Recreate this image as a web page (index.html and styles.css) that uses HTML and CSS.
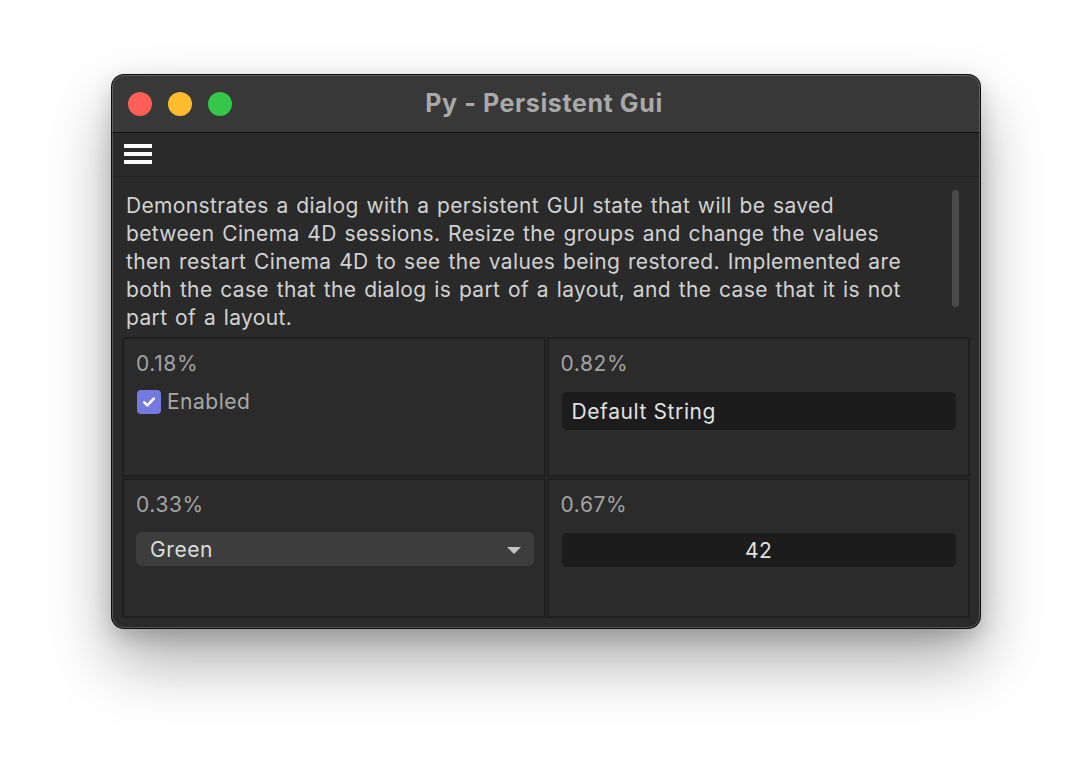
FILE: index.html
```html
<!DOCTYPE html>
<html lang="en">
<head>
<meta charset="utf-8">
<title>Py - Persistent Gui</title>
<link rel="stylesheet" href="styles.css">
</head>
<body>
<div class="stage">
  <div class="window">
    <div class="titlebar">
      <div class="lights">
        <span class="light red"></span>
        <span class="light yellow"></span>
        <span class="light green"></span>
      </div>
      <div class="title">Py - Persistent Gui</div>
      <div class="spacer"></div>
    </div>
    <div class="toolbar">
      <span class="hamburger"><i></i><i></i><i></i></span>
    </div>
    <div class="content">
      <div class="desc-wrap">
        <p class="desc">Demonstrates a dialog with a persistent GUI state that will be saved<br>between Cinema 4D sessions. Resize the groups and change the values<br>then restart Cinema 4D to see the values being restored. Implemented are<br>both the case that the dialog is part of a layout, and the case that it is not<br>part of a layout.</p>
        <div class="scrollbar"></div>
      </div>
      <div class="grid">
        <div class="cell">
          <div class="label">0.18%</div>
          <label class="check">
            <span class="box"><svg width="16" height="16" viewBox="0 0 16 16"><path d="M3.2 8.4 L6.4 11.4 L12.8 4.6" fill="none" stroke="#fff" stroke-width="2.6" stroke-linecap="round" stroke-linejoin="round"/></svg></span>
            <span class="check-text">Enabled</span>
          </label>
        </div>
        <div class="cell">
          <div class="label">0.82%</div>
          <div class="field text-field">Default String</div>
        </div>
        <div class="cell">
          <div class="label">0.33%</div>
          <div class="dropdown">
            <span>Green</span>
            <svg class="arrow" width="14" height="8" viewBox="0 0 14 8"><path d="M0 0 H14 L7 7 Z" fill="#c4c4c4"/></svg>
          </div>
        </div>
        <div class="cell">
          <div class="label">0.67%</div>
          <div class="field number-field">42</div>
        </div>
      </div>
    </div>
  </div>
</div>
</body>
</html>
```
FILE: styles.css
```css
* { box-sizing: border-box; }
html, body { margin: 0; padding: 0; background: #ffffff; }
body { font-family: Inter, "Open Sans", "Liberation Sans", sans-serif; }

.stage {
  height: 776px;
  padding: 75px 0 0 112px;
}

.window {
  position: relative;
  width: 868px;
  height: 553px;
  border-radius: 12px;
  overflow: hidden;
  background: #2a2a2a;
  box-shadow: 0 0 0 1px #0c0c0c, 0 32px 64px rgba(0,0,0,0.34), 0 8px 22px rgba(0,0,0,0.18);
  display: flex;
  flex-direction: column;
}
.window::after {
  content: "";
  position: absolute;
  inset: 0;
  border-radius: 12px;
  border: 1px solid rgba(255,255,255,0.2);
  pointer-events: none;
}

.titlebar {
  height: 58px;
  background: #383838;
  border-bottom: 1px solid #101010;
  display: grid;
  grid-template-columns: 1fr auto 1fr;
  align-items: center;
  flex: none;
}
.lights {
  display: flex;
  gap: 16px;
  padding-left: 16px;
}
.light {
  width: 24px;
  height: 24px;
  border-radius: 50%;
  display: block;
}
.red { background: #fe5f57; }
.yellow { background: #febc2e; }
.green { background: #34c749; }
.title {
  color: #a9a9a9;
  font-weight: 700;
  font-size: 25px;
  letter-spacing: 0.6px;
  padding-bottom: 2px;
  padding-right: 4px;
}

.toolbar {
  height: 44px;
  background: #2a2a2a;
  border-bottom: 1px solid #222222;
  display: flex;
  align-items: center;
  padding-left: 12px;
  flex: none;
}
.hamburger {
  display: flex;
  flex-direction: column;
  gap: 4px;
  width: 28px;
  margin-top: -1px;
}
.hamburger i {
  display: block;
  height: 4px;
  background: #ffffff;
}

.content {
  flex: 1;
  background: #2a2a2a;
  display: flex;
  flex-direction: column;
  padding: 0 10px 10px 10px;
}
.desc-wrap {
  display: flex;
  align-items: flex-start;
  padding: 15px 11px 0 4px;
}
.desc {
  flex: 1;
  margin: 0;
  color: #d2d2d2;
  font-size: 21px;
  line-height: 28px;
  letter-spacing: 0.35px;
  word-spacing: 1.5px;
}
.scrollbar {
  width: 7px;
  height: 117px;
  margin-top: -2px;
  border-radius: 4px;
  background: #4a4a4a;
  flex: none;
}

.grid {
  margin-top: 5px;
  flex: 1;
  display: grid;
  grid-template-columns: 1fr 1fr;
  grid-template-rows: 1fr 1fr;
  gap: 1px;
}
.cell {
  background: #2b2b2b;
  border: 2px solid #1f1f1f;
  padding: 13px 12px 0 12px;
}
.label {
  color: #a3a3a3;
  font-size: 21px;
  line-height: 24px;
  letter-spacing: 0.6px;
}

.check {
  display: flex;
  align-items: center;
  gap: 6px;
  margin-top: 14px;
  margin-left: 1px;
}
.box {
  width: 24px;
  height: 24px;
  border-radius: 4px;
  background: #7479df;
  display: flex;
  align-items: center;
  justify-content: center;
}
.check-text {
  color: #a8a8a8;
  font-size: 21px;
  line-height: 24px;
  letter-spacing: 0.5px;
}

.field {
  background: #1c1c1c;
  border-radius: 5px;
  color: #e2e2e2;
  font-size: 21px;
  letter-spacing: 0.6px;
  display: flex;
  align-items: center;
  margin-left: 1px;
}
.text-field {
  height: 38px;
  margin-top: 16px;
  padding-left: 10px;
}
.number-field {
  height: 34px;
  margin-top: 16px;
  justify-content: center;
}

.dropdown {
  height: 34px;
  margin-top: 15px;
  margin-right: -2px;
  background: #3d3d3d;
  border-radius: 6px;
  display: flex;
  align-items: center;
  justify-content: space-between;
  padding: 0 13px 0 14px;
  color: #dcdcdc;
  font-size: 21px;
  letter-spacing: 0.6px;
}
.arrow { margin-top: 3px; }
```
